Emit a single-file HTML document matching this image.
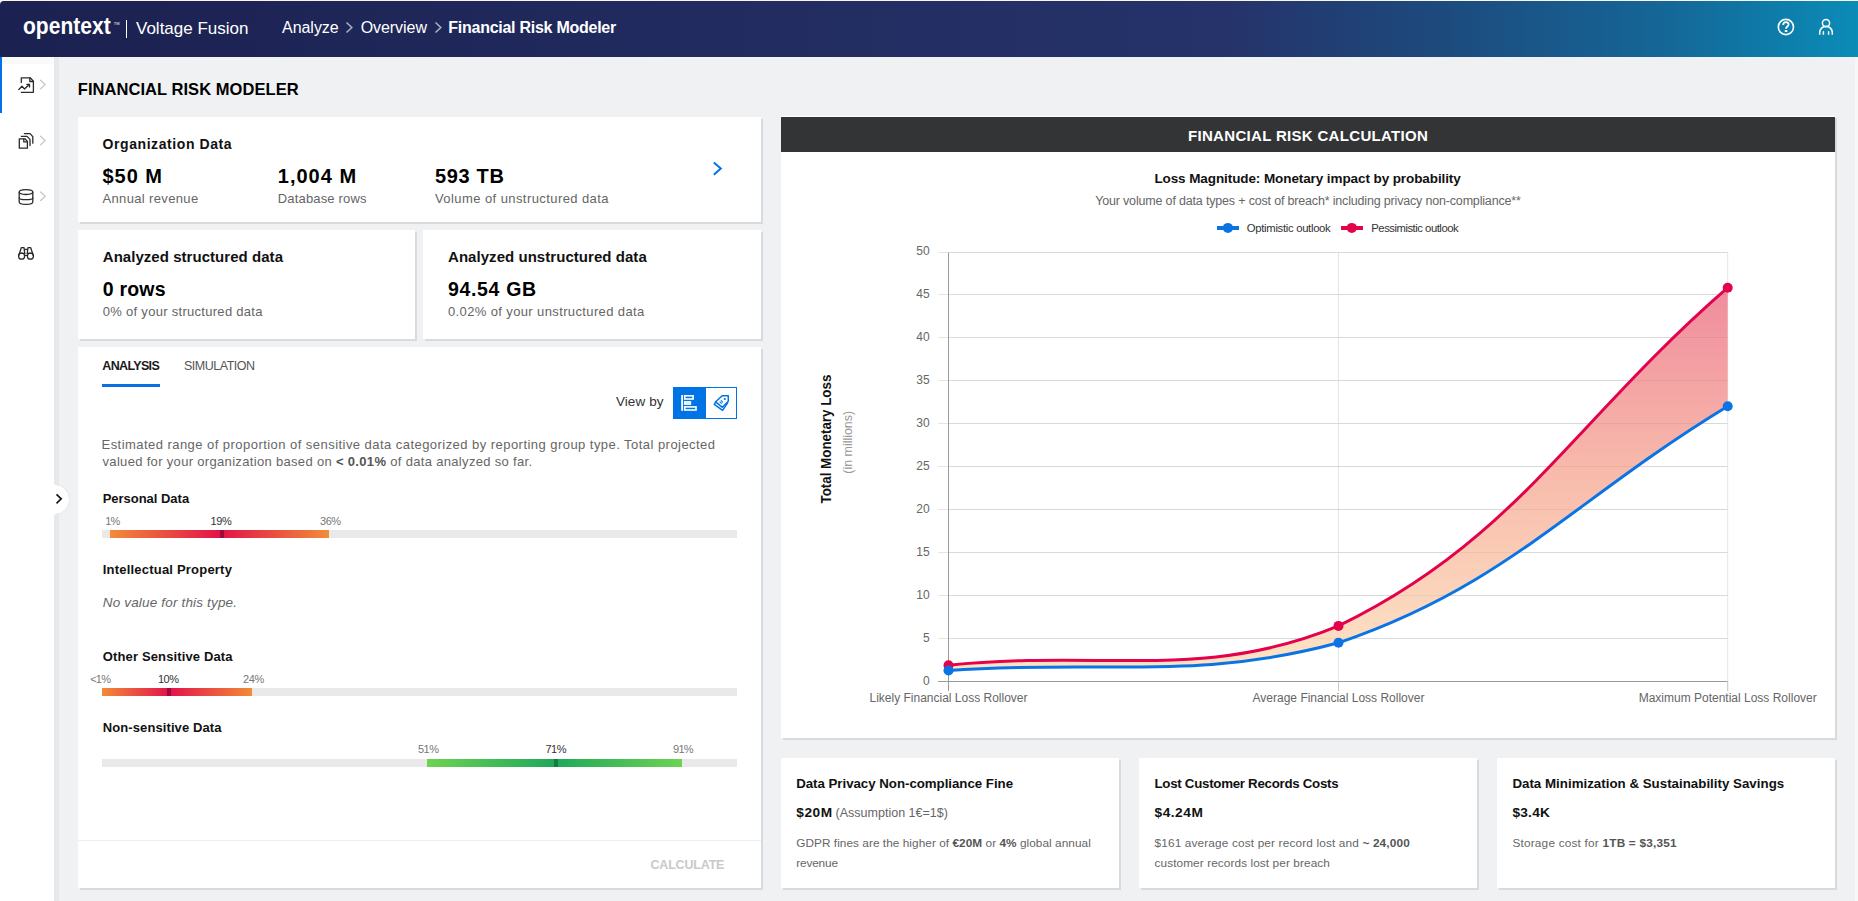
<!DOCTYPE html>
<html><head><meta charset="utf-8"><title>Financial Risk Modeler</title><style>
*{box-sizing:border-box}
html,body{margin:0;padding:0;width:1858px;height:901px;overflow:hidden;background:#f0f1f3;font-family:"Liberation Sans",sans-serif}
.abs{position:absolute}
.t{position:absolute;white-space:nowrap;line-height:1}
.card{position:absolute;background:#fff;box-shadow:2px 2px 0 #d9dadd}
</style></head>
<body>
<div class="abs" style="left:0;top:0;width:1858px;height:1px;background:#fbf5f1"></div>
<div class="abs" style="left:0;top:1px;width:1858px;height:56px;border-top-left-radius:4px;background:linear-gradient(90deg,#1b2150 0%,#212a5e 35%,#25336a 66%,#1d4b7e 78%,#146898 90%,#0a8cb7 100%)"></div>
<div class="abs" style="left:125.6px;top:20px;width:1.4px;height:18px;background:#fff"></div>
<div class="abs" style="left:113.8px;top:22px;font-size:4px;line-height:1;color:#fff;font-weight:400;letter-spacing:-0.1px">TM</div>
<!-- sidebar -->
<div class="abs" style="left:0;top:57px;width:54px;height:844px;background:#fff"></div>
<div class="abs" style="left:54px;top:57px;width:5px;height:844px;background:#e7e8ea"></div>
<div class="abs" style="left:2px;top:57px;width:52px;height:7px;background:#fafafa"></div>
<div class="abs" style="left:0;top:57px;width:2px;height:56px;background:#0073e7"></div>
<div class="abs" style="left:1855px;top:57px;width:3px;height:844px;background:#f7f7f8"></div>
<!-- cards -->
<div class="card" style="left:78px;top:117px;width:683px;height:105px"></div>
<div class="card" style="left:78px;top:230px;width:337px;height:109px"></div>
<div class="card" style="left:423px;top:230px;width:338px;height:109px"></div>
<div class="card" style="left:78px;top:347px;width:683px;height:541px"></div>
<div class="abs" style="left:78px;top:840px;width:683px;height:1px;background:#eeeff1"></div>
<div class="card" style="left:781px;top:116px;width:1054px;height:622px"></div>
<div class="abs" style="left:781px;top:117px;width:1054px;height:35px;background:#333436"></div>
<div class="card" style="left:781px;top:758px;width:338px;height:130px"></div>
<div class="card" style="left:1139px;top:758px;width:338px;height:130px"></div>
<div class="card" style="left:1497px;top:758px;width:338px;height:130px"></div>
<!-- tab underline -->
<div class="abs" style="left:102px;top:384px;width:58px;height:3px;background:#0a6fe6"></div>
<!-- view by buttons -->
<div class="abs" style="left:673px;top:387px;width:64px;height:32px;border:1px solid #0073e7;background:#fff"></div>
<div class="abs" style="left:673px;top:387px;width:33px;height:32px;background:#0073e7"></div>
<svg class="abs" style="left:673px;top:387px" width="64" height="32" viewBox="673 387 64 32">
<rect x="681.2" y="395" width="1.8" height="15.8" fill="#fff"/>
<g fill="none" stroke="#fff" stroke-width="1.6">
<rect x="684.7" y="395.8" width="8.4" height="3.2"/>
<rect x="684.7" y="401.9" width="5.7" height="2.2" fill="#a9c9f3"/>
<rect x="684.7" y="406.9" width="11.3" height="3.1"/>
</g>
<g fill="none" stroke="#0073e7" stroke-width="1.5" stroke-linejoin="round">
<path d="M722.2,395.8 H728.3 V401.2 L722.4,407.3 L715.7,401.8 Z"/>
<path d="M715.7,401.8 L714.3,404.3 L722.6,410.3 L727.8,402.6"/>
<path d="M719.6,401.6 L721.8,403.6 M720.9,400.3 L723,402.3" stroke-width="1.1"/>
</g>
<circle cx="724.8" cy="399" r="1.1" fill="#0073e7"/>
</svg>
<!-- org chevron -->
<svg class="abs" style="left:710px;top:158px" width="16" height="22" viewBox="710 158 16 22"><path d="M713.8,162.5 L720.8,168.6 L713.8,174.7" fill="none" stroke="#0073e7" stroke-width="2"/></svg>
<!-- breadcrumb chevrons -->
<svg class="abs" style="left:340px;top:15px" width="110" height="25" viewBox="340 15 110 25"><g fill="none" stroke="#a9adc4" stroke-width="1.6"><path d="M346.5,22.5 L351.8,27.5 L346.5,32.5"/><path d="M435.5,22.5 L440.8,27.5 L435.5,32.5"/></g></svg>
<!-- header icons -->
<svg class="abs" style="left:1770px;top:10px" width="70" height="36" viewBox="1770 10 70 36"><g fill="none" stroke="#fff" stroke-width="1.6"><circle cx="1785.9" cy="27" r="7.6"/><path d="M1783.2,25 C1783.2,23 1784.5,22.1 1785.9,22.1 C1787.4,22.1 1788.6,23 1788.6,24.5 C1788.6,26.4 1786,26.6 1786,28.8" stroke-width="1.8"/><circle cx="1826" cy="23.1" r="3.6" stroke-width="1.5"/><path d="M1819.7,34.8 V32.6 A6.3,6.3 0 0 1 1832.3,32.6 V34.8" stroke-width="1.5"/><path d="M1823.4,31.2 V34.8 M1828.6,31.2 V34.8" stroke-width="1.5"/></g><rect x="1784.6" y="30" width="2.9" height="1.9" rx="0.9" fill="#fff"/></svg>
<!-- bars -->
<div class="abs" style="left:102px;top:530px;width:635px;height:8px;background:#e9e9e9"></div>
<div class="abs" style="left:110px;top:530px;width:219px;height:8px;background:linear-gradient(90deg,#f28b38 0%,#e2134a 50%,#f28b38 100%)"></div>
<div class="abs" style="left:220px;top:530px;width:4px;height:8px;background:#9d0a3c"></div>
<div class="abs" style="left:102px;top:688px;width:635px;height:8px;background:#e9e9e9"></div>
<div class="abs" style="left:102px;top:688px;width:150px;height:8px;background:linear-gradient(90deg,#f28b38 0%,#e2134a 45%,#f28b38 100%)"></div>
<div class="abs" style="left:167px;top:688px;width:4px;height:8px;background:#9d0a3c"></div>
<div class="abs" style="left:102px;top:759px;width:635px;height:8px;background:#e9e9e9"></div>
<div class="abs" style="left:427px;top:759px;width:255px;height:8px;background:linear-gradient(90deg,#6dd352 0%,#1ea85a 50%,#6dd352 100%)"></div>
<div class="abs" style="left:554px;top:759px;width:4px;height:8px;background:#157a45"></div>
<!-- collapse circle -->
<div class="abs" style="left:39px;top:484px;width:30.5px;height:30.5px;border-radius:50%;background:#fff;border:1px solid #e4e4e4;clip-path:inset(0 0 0 15px)"></div>
<div class="abs" style="left:39px;top:484px;width:16px;height:31px;background:#fff"></div>
<svg class="abs" style="left:52px;top:490px" width="14" height="18" viewBox="52 490 14 18"><path d="M56.5,494.3 L61.2,498.8 L56.5,503.3" fill="none" stroke="#111" stroke-width="1.6"/></svg>
<svg class="abs" style="left:0;top:57px" width="54" height="250" viewBox="0 57 54 250" fill="none" stroke="#2b2b2b" stroke-width="1.3" stroke-linecap="round" stroke-linejoin="round">
<path d="M21.3,82.5 V77.8 H30.2 L33.4,81.2 V92.3 H21.3"/><path d="M29.8,77.8 V81.5 H33.4"/>
<path d="M18.8,89.5 L22,86.3 L24.5,89 L29.2,84.5"/><path d="M26.8,84.3 H29.5 V87"/>
<path d="M40.6,80.3 L45.2,84.5 L40.6,88.7" stroke="#c9c9c9" stroke-width="1.4"/>
<path d="M40.6,136.3 L45.2,140.5 L40.6,144.7" stroke="#c9c9c9" stroke-width="1.4"/>
<path d="M40.6,192.10000000000002 L45.2,196.3 L40.6,200.5" stroke="#c9c9c9" stroke-width="1.4"/>
<path d="M19.3,148.2 V138.8 H25 L27.4,141.4 V148.2 Z"/><path d="M23.8,138.8 V141.9 H27.4"/>
<path d="M21.4,136.4 H27 L30,139.4 V145.6"/><path d="M24.4,133.6 H30 L32.8,136.6 V143.2"/>
<ellipse cx="26" cy="192.1" rx="6.8" ry="2.4"/><path d="M19.2,192.1 V202 C19.2,205.2 32.8,205.2 32.8,202 V192.1"/><path d="M19.2,197.9 C19.2,200.3 32.8,200.3 32.8,197.9"/>
<circle cx="21.6" cy="256.2" r="3"/><circle cx="30.4" cy="256.2" r="3"/>
<path d="M18.8,255.3 L21.3,247.7 H24 L24.8,253.6"/><path d="M33.2,255.3 L30.7,247.7 H28 L27.2,253.6"/>
<path d="M19.6,253.4 H32.4" /><path d="M24.9,249.4 H27.1 M24.9,255.4 H27.1"/>
<rect x="25.4" y="250" width="1.2" height="4.8" fill="#e3e3e3" stroke="none"/>
</svg>
<svg class="abs" style="left:781px;top:152px" width="1054" height="586" viewBox="781 152 1054 586">
<defs><linearGradient id="fg" x1="0" y1="287" x2="0" y2="681" gradientUnits="userSpaceOnUse"><stop offset="0" stop-color="#f08c9d"/><stop offset="0.5" stop-color="#f8bdac"/><stop offset="1" stop-color="#fde6c8"/></linearGradient></defs>
<line x1="938" y1="252.50" x2="1727.7" y2="252.50" stroke="#e5e5e5" stroke-width="1"/>
<line x1="938" y1="294.50" x2="1727.7" y2="294.50" stroke="#e5e5e5" stroke-width="1"/>
<line x1="938" y1="337.50" x2="1727.7" y2="337.50" stroke="#e5e5e5" stroke-width="1"/>
<line x1="938" y1="380.50" x2="1727.7" y2="380.50" stroke="#e5e5e5" stroke-width="1"/>
<line x1="938" y1="423.50" x2="1727.7" y2="423.50" stroke="#e5e5e5" stroke-width="1"/>
<line x1="938" y1="466.50" x2="1727.7" y2="466.50" stroke="#e5e5e5" stroke-width="1"/>
<line x1="938" y1="509.50" x2="1727.7" y2="509.50" stroke="#e5e5e5" stroke-width="1"/>
<line x1="938" y1="552.50" x2="1727.7" y2="552.50" stroke="#e5e5e5" stroke-width="1"/>
<line x1="938" y1="595.50" x2="1727.7" y2="595.50" stroke="#e5e5e5" stroke-width="1"/>
<line x1="938" y1="638.50" x2="1727.7" y2="638.50" stroke="#e5e5e5" stroke-width="1"/>
<line x1="1338.5" y1="252.5" x2="1338.5" y2="691" stroke="#e5e5e5" stroke-width="1"/>
<line x1="1727.7" y1="252.5" x2="1727.7" y2="691" stroke="#e5e5e5" stroke-width="1"/>
<path d="M948.50,665.20 C1104.50,649.48 1203.89,681.50 1338.50,625.90 C1515.57,540.11 1572.02,422.98 1727.70,287.70 L1727.7,406.2 C1572.02,500.84 1506.21,585.91 1338.50,642.80 C1194.53,681.50 1104.50,659.42 948.50,670.50 Z" fill="url(#fg)"/>
<line x1="949" y1="252.50" x2="1727.7" y2="252.50" stroke="#000" stroke-opacity="0.05" stroke-width="1"/>
<line x1="949" y1="294.50" x2="1727.7" y2="294.50" stroke="#000" stroke-opacity="0.05" stroke-width="1"/>
<line x1="949" y1="337.50" x2="1727.7" y2="337.50" stroke="#000" stroke-opacity="0.05" stroke-width="1"/>
<line x1="949" y1="380.50" x2="1727.7" y2="380.50" stroke="#000" stroke-opacity="0.05" stroke-width="1"/>
<line x1="949" y1="423.50" x2="1727.7" y2="423.50" stroke="#000" stroke-opacity="0.05" stroke-width="1"/>
<line x1="949" y1="466.50" x2="1727.7" y2="466.50" stroke="#000" stroke-opacity="0.05" stroke-width="1"/>
<line x1="949" y1="509.50" x2="1727.7" y2="509.50" stroke="#000" stroke-opacity="0.05" stroke-width="1"/>
<line x1="949" y1="552.50" x2="1727.7" y2="552.50" stroke="#000" stroke-opacity="0.05" stroke-width="1"/>
<line x1="949" y1="595.50" x2="1727.7" y2="595.50" stroke="#000" stroke-opacity="0.05" stroke-width="1"/>
<line x1="949" y1="638.50" x2="1727.7" y2="638.50" stroke="#000" stroke-opacity="0.05" stroke-width="1"/>
<line x1="938" y1="681.5" x2="1727.7" y2="681.5" stroke="#9a9a9a" stroke-width="1"/>
<line x1="948.5" y1="252.5" x2="948.5" y2="691" stroke="#9a9a9a" stroke-width="1"/>
<line x1="1338.5" y1="681.5" x2="1338.5" y2="691" stroke="#c8c8c8" stroke-width="1"/>
<line x1="1727.7" y1="681.5" x2="1727.7" y2="691" stroke="#c8c8c8" stroke-width="1"/>
<path d="M948.50,665.20 C1104.50,649.48 1203.89,681.50 1338.50,625.90 C1515.57,540.11 1572.02,422.98 1727.70,287.70" fill="none" stroke="#e2034a" stroke-width="3"/>
<path d="M948.50,670.50 C1104.50,659.42 1194.53,681.50 1338.50,642.80 C1506.21,585.91 1572.02,500.84 1727.70,406.20" fill="none" stroke="#0a74e4" stroke-width="3"/>
<circle cx="948.5" cy="665.2" r="5" fill="#e2034a"/>
<circle cx="1338.5" cy="625.9" r="5" fill="#e2034a"/>
<circle cx="1727.7" cy="287.7" r="5" fill="#e2034a"/>
<circle cx="948.5" cy="670.5" r="5" fill="#0a74e4"/>
<circle cx="1338.5" cy="642.8" r="5" fill="#0a74e4"/>
<circle cx="1727.7" cy="406.2" r="5" fill="#0a74e4"/>
<text x="929.7" y="255.10" text-anchor="end" font-size="12" fill="#666">50</text>
<text x="929.7" y="298.10" text-anchor="end" font-size="12" fill="#666">45</text>
<text x="929.7" y="341.10" text-anchor="end" font-size="12" fill="#666">40</text>
<text x="929.7" y="384.10" text-anchor="end" font-size="12" fill="#666">35</text>
<text x="929.7" y="427.10" text-anchor="end" font-size="12" fill="#666">30</text>
<text x="929.7" y="470.10" text-anchor="end" font-size="12" fill="#666">25</text>
<text x="929.7" y="513.10" text-anchor="end" font-size="12" fill="#666">20</text>
<text x="929.7" y="556.10" text-anchor="end" font-size="12" fill="#666">15</text>
<text x="929.7" y="599.10" text-anchor="end" font-size="12" fill="#666">10</text>
<text x="929.7" y="642.10" text-anchor="end" font-size="12" fill="#666">5</text>
<text x="929.7" y="685.10" text-anchor="end" font-size="12" fill="#666">0</text>
<text x="948.5" y="702" text-anchor="middle" font-size="12" fill="#666">Likely Financial Loss Rollover</text>
<text x="1338.5" y="702" text-anchor="middle" font-size="12" fill="#666">Average Financial Loss Rollover</text>
<text x="1727.7" y="702" text-anchor="middle" font-size="12" fill="#666">Maximum Potential Loss Rollover</text>
<text transform="translate(831,439.1) rotate(-90)" text-anchor="middle" font-size="14" font-weight="700" fill="#111" textLength="128.8" lengthAdjust="spacingAndGlyphs">Total Monetary Loss</text>
<text transform="translate(852,442.3) rotate(-90)" text-anchor="middle" font-size="12.5" fill="#999" textLength="62.8" lengthAdjust="spacingAndGlyphs">(in millions)</text>
</svg>
<!-- legend -->
<svg class="abs" style="left:1210px;top:218px" width="160" height="20" viewBox="1210 218 160 20">
<rect x="1217" y="226" width="22" height="4" fill="#0a74e4"/><circle cx="1227.9" cy="227.9" r="5" fill="#0a74e4"/>
<rect x="1341" y="226" width="22" height="4" fill="#e2034a"/><circle cx="1351.8" cy="227.9" r="5" fill="#e2034a"/>
</svg>
<span class="t" style="left:22.80px;top:14.61px;font-size:23.5px;font-weight:700;color:#fff;transform:scaleX(0.895);transform-origin:0 0">opentext</span>
<span class="t" style="left:136.00px;top:19.61px;font-size:17px;font-weight:400;font-style:normal;color:#fff;letter-spacing:-0.001px;">Voltage Fusion</span>
<span class="t" style="left:282.00px;top:19.56px;font-size:16px;font-weight:400;font-style:normal;color:#fff;letter-spacing:-0.037px;">Analyze</span>
<span class="t" style="left:360.70px;top:19.56px;font-size:16px;font-weight:400;font-style:normal;color:#fff;letter-spacing:-0.062px;">Overview</span>
<span class="t" style="left:448.30px;top:19.56px;font-size:16px;font-weight:700;font-style:normal;color:#fff;letter-spacing:-0.26px;">Financial Risk Modeler</span>
<span class="t" style="left:77.80px;top:80.83px;font-size:16.5px;font-weight:700;font-style:normal;color:#000;letter-spacing:0.053px;">FINANCIAL RISK MODELER</span>
<span class="t" style="left:102.50px;top:137.25px;font-size:14px;font-weight:700;font-style:normal;color:#111;letter-spacing:0.581px;">Organization Data</span>
<span class="t" style="left:102.50px;top:166.07px;font-size:20px;font-weight:700;font-style:normal;color:#000;letter-spacing:0.967px;">$50 M</span>
<span class="t" style="left:277.80px;top:166.07px;font-size:20px;font-weight:700;font-style:normal;color:#000;letter-spacing:0.999px;">1,004 M</span>
<span class="t" style="left:435.00px;top:166.07px;font-size:20px;font-weight:700;font-style:normal;color:#000;letter-spacing:0.65px;">593 TB</span>
<span class="t" style="left:102.50px;top:191.80px;font-size:13px;font-weight:400;font-style:normal;color:#656565;letter-spacing:0.35px;">Annual revenue</span>
<span class="t" style="left:277.80px;top:191.80px;font-size:13px;font-weight:400;font-style:normal;color:#656565;letter-spacing:0.165px;">Database rows</span>
<span class="t" style="left:435.00px;top:191.80px;font-size:13px;font-weight:400;font-style:normal;color:#656565;letter-spacing:0.42px;">Volume of unstructured data</span>
<span class="t" style="left:102.75px;top:249.30px;font-size:15px;font-weight:700;font-style:normal;color:#111;letter-spacing:0.045px;">Analyzed structured data</span>
<span class="t" style="left:102.75px;top:279.99px;font-size:19.5px;font-weight:700;font-style:normal;color:#000;letter-spacing:0.213px;">0 rows</span>
<span class="t" style="left:102.75px;top:304.60px;font-size:13px;font-weight:400;font-style:normal;color:#656565;letter-spacing:0.29px;">0% of your structured data</span>
<span class="t" style="left:448.00px;top:249.30px;font-size:15px;font-weight:700;font-style:normal;color:#111;letter-spacing:0.048px;">Analyzed unstructured data</span>
<span class="t" style="left:448.00px;top:279.99px;font-size:19.5px;font-weight:700;font-style:normal;color:#000;letter-spacing:0.659px;">94.54 GB</span>
<span class="t" style="left:448.00px;top:304.60px;font-size:13px;font-weight:400;font-style:normal;color:#656565;letter-spacing:0.374px;">0.02% of your unstructured data</span>
<span class="t" style="left:102.30px;top:360.22px;font-size:12.5px;font-weight:700;font-style:normal;color:#1a1a1a;letter-spacing:-0.661px;">ANALYSIS</span>
<span class="t" style="left:184.00px;top:360.22px;font-size:12.5px;font-weight:400;font-style:normal;color:#555;letter-spacing:-0.495px;">SIMULATION</span>
<span class="t" style="left:615.90px;top:395.37px;font-size:13.5px;font-weight:400;font-style:normal;color:#333;letter-spacing:0.103px;">View by</span>
<span class="t" style="left:101.50px;top:437.60px;font-size:13px;font-weight:400;font-style:normal;color:#666;letter-spacing:0.455px;">Estimated range of proportion of sensitive data categorized by reporting group type. Total projected</span>
<span class="t" style="left:102.50px;top:455.40px;font-size:13px;font-weight:400;font-style:normal;color:#666;letter-spacing:0.324px;">valued for your organization based on <b style="color:#555">&lt; 0.01%</b> of data analyzed so far.</span>
<span class="t" style="left:102.70px;top:491.80px;font-size:13px;font-weight:700;font-style:normal;color:#111;letter-spacing:-0.023px;">Personal Data</span>
<span class="t" style="left:105.24px;top:515.59px;font-size:11px;font-weight:400;font-style:normal;color:#777;letter-spacing:-0.8px;">1%</span>
<span class="t" style="left:210.40px;top:515.59px;font-size:11px;font-weight:400;font-style:normal;color:#333;letter-spacing:-0.375px;">19%</span>
<span class="t" style="left:320.00px;top:515.59px;font-size:11px;font-weight:400;font-style:normal;color:#777;letter-spacing:-0.475px;">36%</span>
<span class="t" style="left:102.75px;top:562.50px;font-size:13px;font-weight:700;font-style:normal;color:#111;letter-spacing:0.207px;">Intellectual Property</span>
<span class="t" style="left:102.75px;top:596.27px;font-size:13.5px;font-weight:400;font-style:italic;color:#666;letter-spacing:0.167px;">No value for this type.</span>
<span class="t" style="left:102.80px;top:649.80px;font-size:13px;font-weight:700;font-style:normal;color:#111;letter-spacing:0.135px;">Other Sensitive Data</span>
<span class="t" style="left:90.23px;top:673.59px;font-size:11px;font-weight:400;font-style:normal;color:#777;letter-spacing:-0.8px;">&lt;1%</span>
<span class="t" style="left:158.00px;top:673.59px;font-size:11px;font-weight:400;font-style:normal;color:#333;letter-spacing:-0.525px;">10%</span>
<span class="t" style="left:243.00px;top:673.59px;font-size:11px;font-weight:400;font-style:normal;color:#777;letter-spacing:-0.375px;">24%</span>
<span class="t" style="left:102.75px;top:720.80px;font-size:13px;font-weight:700;font-style:normal;color:#111;letter-spacing:0.099px;">Non-sensitive Data</span>
<span class="t" style="left:417.90px;top:744.49px;font-size:11px;font-weight:400;font-style:normal;color:#777;letter-spacing:-0.475px;">51%</span>
<span class="t" style="left:545.40px;top:744.49px;font-size:11px;font-weight:400;font-style:normal;color:#333;letter-spacing:-0.475px;">71%</span>
<span class="t" style="left:673.00px;top:744.49px;font-size:11px;font-weight:400;font-style:normal;color:#777;letter-spacing:-0.725px;">91%</span>
<span class="t" style="left:650.50px;top:859.12px;font-size:12.5px;font-weight:700;font-style:normal;color:#c9c9c9;letter-spacing:-0.189px;">CALCULATE</span>
<span class="t" style="left:1188.00px;top:128.30px;font-size:15px;font-weight:700;font-style:normal;color:#fff;letter-spacing:0.316px;">FINANCIAL RISK CALCULATION</span>
<span class="t" style="left:1154.40px;top:171.77px;font-size:13.5px;font-weight:700;font-style:normal;color:#111;letter-spacing:-0.092px;">Loss Magnitude: Monetary impact by probability</span>
<span class="t" style="left:1095.20px;top:194.72px;font-size:12.5px;font-weight:400;font-style:normal;color:#666;letter-spacing:-0.174px;">Your volume of data types + cost of breach* including privacy non-compliance**</span>
<span class="t" style="left:1246.80px;top:222.93px;font-size:11.3px;font-weight:400;font-style:normal;color:#333;letter-spacing:-0.306px;">Optimistic outlook</span>
<span class="t" style="left:1371.30px;top:222.93px;font-size:11.3px;font-weight:400;font-style:normal;color:#333;letter-spacing:-0.484px;">Pessimistic outlook</span>
<span class="t" style="left:796.20px;top:776.64px;font-size:13.3px;font-weight:700;font-style:normal;color:#111;letter-spacing:-0.036px;">Data Privacy Non-compliance Fine</span>
<span class="t" style="left:796.20px;top:805.90px;font-size:13.7px;font-weight:700;font-style:normal;color:#111;letter-spacing:0.584px;">$20M</span>
<span class="t" style="left:835.50px;top:806.92px;font-size:12.5px;font-weight:400;font-style:normal;color:#666;letter-spacing:0.014px;">(Assumption 1€=1$)</span>
<span class="t" style="left:796.20px;top:837.71px;font-size:11.8px;font-weight:400;font-style:normal;color:#666;letter-spacing:0.053px;">GDPR fines are the higher of <b style="color:#555">€20M</b> or <b style="color:#555">4%</b> global annual</span>
<span class="t" style="left:796.20px;top:857.81px;font-size:11.8px;font-weight:400;font-style:normal;color:#666;letter-spacing:-0.147px;">revenue</span>
<span class="t" style="left:1154.50px;top:776.64px;font-size:13.3px;font-weight:700;font-style:normal;color:#111;letter-spacing:-0.28px;">Lost Customer Records Costs</span>
<span class="t" style="left:1154.50px;top:805.90px;font-size:13.7px;font-weight:700;font-style:normal;color:#111;letter-spacing:0.529px;">$4.24M</span>
<span class="t" style="left:1154.50px;top:837.71px;font-size:11.8px;font-weight:400;font-style:normal;color:#666;letter-spacing:0.156px;">$161 average cost per record lost and <b style="color:#555">~ 24,000</b></span>
<span class="t" style="left:1154.50px;top:857.81px;font-size:11.8px;font-weight:400;font-style:normal;color:#666;letter-spacing:0.094px;">customer records lost per breach</span>
<span class="t" style="left:1512.40px;top:776.64px;font-size:13.3px;font-weight:700;font-style:normal;color:#111;letter-spacing:0.015px;">Data Minimization &amp; Sustainability Savings</span>
<span class="t" style="left:1512.40px;top:805.90px;font-size:13.7px;font-weight:700;font-style:normal;color:#111;letter-spacing:0.238px;">$3.4K</span>
<span class="t" style="left:1512.40px;top:837.71px;font-size:11.8px;font-weight:400;font-style:normal;color:#666;letter-spacing:0.207px;">Storage cost for <b style="color:#555">1TB = $3,351</b></span>
</body></html>
